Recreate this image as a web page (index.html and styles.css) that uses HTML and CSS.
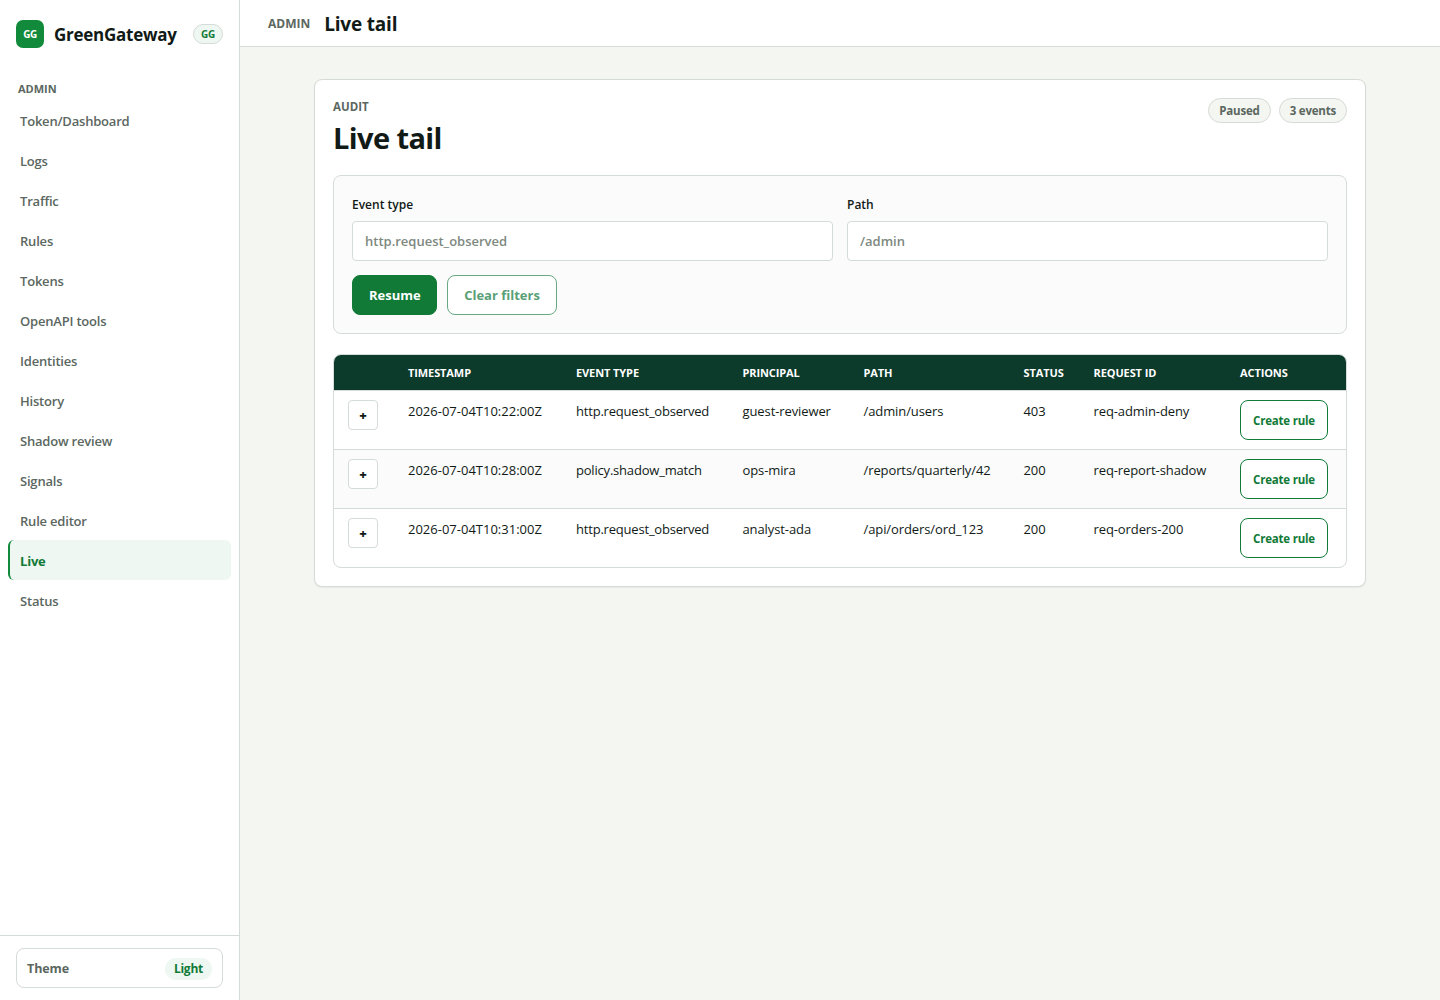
FILE: index.html
```html
<!DOCTYPE html>
<html lang="en">
<head>
<meta charset="utf-8">
<title>GreenGateway – Live tail</title>
<link rel="stylesheet" href="styles.css">
</head>
<body>
<div class="shell">
  <aside class="sidebar">
    <div class="brand">
      <span class="brand-mark">GG</span>
      <span class="brand-name">GreenGateway</span>
      <span class="brand-badge">GG</span>
    </div>
    <div class="nav-heading">ADMIN</div>
    <nav class="nav">
      <a class="nav-link">Token/Dashboard</a>
      <a class="nav-link">Logs</a>
      <a class="nav-link">Traffic</a>
      <a class="nav-link">Rules</a>
      <a class="nav-link">Tokens</a>
      <a class="nav-link">OpenAPI tools</a>
      <a class="nav-link">Identities</a>
      <a class="nav-link">History</a>
      <a class="nav-link">Shadow review</a>
      <a class="nav-link">Signals</a>
      <a class="nav-link">Rule editor</a>
      <a class="nav-link active">Live</a>
      <a class="nav-link">Status</a>
    </nav>
    <div class="sidebar-footer">
      <button class="theme-toggle"><span>Theme</span><span class="theme-value">Light</span></button>
    </div>
  </aside>
  <div class="main">
    <header class="topbar">
      <span class="topbar-section">ADMIN</span>
      <span class="topbar-title">Live tail</span>
    </header>
    <main class="content">
      <section class="card">
        <div class="card-head">
          <div>
            <div class="eyebrow">AUDIT</div>
            <h1 class="title">Live tail</h1>
          </div>
          <div class="pills">
            <span class="pill">Paused</span>
            <span class="pill">3 events</span>
          </div>
        </div>
        <form class="filters">
          <label class="field"><span class="field-label">Event type</span><input class="input" placeholder="http.request_observed"></label>
          <label class="field"><span class="field-label">Path</span><input class="input" placeholder="/admin"></label>
          <div class="actions">
            <button type="button" class="btn btn-primary">Resume</button>
            <button type="button" class="btn btn-muted">Clear filters</button>
          </div>
        </form>
        <div class="table-wrap">
          <table class="table">
            <colgroup>
              <col class="c-expand"><col class="c-time"><col class="c-event"><col class="c-principal"><col class="c-path"><col class="c-status"><col class="c-request"><col class="c-actions">
            </colgroup>
            <thead>
              <tr><th></th><th>TIMESTAMP</th><th>EVENT TYPE</th><th>PRINCIPAL</th><th>PATH</th><th>STATUS</th><th>REQUEST ID</th><th>ACTIONS</th></tr>
            </thead>
            <tbody>
              <tr><td class="control"><button class="expand">+</button></td><td class="time">2026-07-04T10:22:00Z</td><td class="event">http.request_observed</td><td>guest-reviewer</td><td>/admin/users</td><td>403</td><td>req-admin-deny</td><td class="control"><button class="btn-row">Create rule</button></td></tr>
              <tr><td class="control"><button class="expand">+</button></td><td class="time">2026-07-04T10:28:00Z</td><td class="event">policy.shadow_match</td><td>ops-mira</td><td>/reports/quarterly/42</td><td>200</td><td>req-report-shadow</td><td class="control"><button class="btn-row">Create rule</button></td></tr>
              <tr><td class="control"><button class="expand">+</button></td><td class="time">2026-07-04T10:31:00Z</td><td class="event">http.request_observed</td><td>analyst-ada</td><td>/api/orders/ord_123</td><td>200</td><td>req-orders-200</td><td class="control"><button class="btn-row">Create rule</button></td></tr>
            </tbody>
          </table>
        </div>
      </section>
    </main>
  </div>
</div>
</body>
</html>
```
FILE: styles.css
```css
:root {
  --ink: #111a16;
  --muted: #5b675f;
  --line: #d5dbd6;
  --green: #117a37;
  --green-soft: #eef7f1;
  --bg: #f4f6f1;
}
* { box-sizing: border-box; }
body {
  margin: 0;
  background: var(--bg);
  color: var(--ink);
  font-family: "Open Sans", "Noto Sans", sans-serif;
  font-size: 13px;
  line-height: 20px;
}
button, input { font: inherit; color: inherit; margin: 0; }
.shell { display: grid; grid-template-columns: 240px 1fr; height: 1000px; }

.sidebar { display: flex; flex-direction: column; background: #fff; border-right: 1px solid var(--line); }
.brand { display: flex; align-items: center; gap: 10px; height: 68px; padding: 0 16px; }
.brand-mark { display: grid; place-items: center; width: 28px; height: 28px; border-radius: 7px; background: #118a3b; color: #fff; font-size: 10px; font-weight: 700; letter-spacing: -0.4px; }
.brand-name { padding-top: 2px; font-size: 17px; font-weight: 700; line-height: 24px; letter-spacing: -0.25px; }
.brand-badge { display: grid; place-items: center; width: 30px; height: 20px; margin-left: auto; border: 1px solid var(--line); border-radius: 10px; background: var(--green-soft); color: var(--green); font-size: 10px; line-height: 18px; font-weight: 700; letter-spacing: -0.3px; }
.nav-heading { padding: 11px 18px 1px; font-size: 11px; font-weight: 700; color: var(--muted); }
.nav { display: flex; flex-direction: column; padding: 0 8px; }
.nav-link { display: flex; align-items: center; height: 40px; padding: 2px 10px 0; border-left: 2px solid transparent; border-radius: 6px; color: var(--muted); font-weight: 600; letter-spacing: -0.2px; }
.nav-link.active { border-left-color: #118a3b; background: var(--green-soft); color: var(--green); font-weight: 700; }
.sidebar-footer { margin-top: auto; padding: 12px 16px; border-top: 1px solid var(--line); }
.theme-toggle { display: flex; align-items: center; justify-content: space-between; width: 100%; height: 40px; padding: 1px 10px 0; border: 1px solid var(--line); border-radius: 8px; background: #fff; color: var(--muted); font-size: 12.5px; font-weight: 700; letter-spacing: -0.1px; }
.theme-value { padding: 1px 9px; border-radius: 11px; background: var(--green-soft); color: var(--green); font-size: 12px; letter-spacing: -0.25px; }

.topbar { display: flex; align-items: center; gap: 14px; height: 47px; padding: 2px 28px 0; background: #fff; border-bottom: 1px solid var(--line); }
.topbar-section { font-size: 12px; font-weight: 700; color: var(--muted); }
.topbar-title { font-size: 19px; font-weight: 700; letter-spacing: -0.2px; }
.content { padding: 32px 74px; }
.card { padding: 18px; border: 1px solid var(--line); border-radius: 8px; background: #fff; box-shadow: 0 1px 2px rgba(17, 26, 22, .06); }
.card-head { display: flex; justify-content: space-between; height: 77px; }
.eyebrow { height: 18px; line-height: 17px; font-size: 11.5px; font-weight: 700; color: var(--muted); }
.title { margin: 4px 0 0; font-size: 29px; line-height: 36px; font-weight: 700; letter-spacing: -0.6px; }
.pills { display: flex; gap: 8px; }
.pill { height: 25px; padding: 0 10px; border: 1px solid var(--line); border-radius: 13px; background: var(--bg); color: var(--muted); font-size: 11.5px; line-height: 24px; font-weight: 700; letter-spacing: -0.2px; }

.filters { display: grid; grid-template-columns: 1fr 1fr; gap: 14px; padding: 18px; border: 1px solid var(--line); border-radius: 8px; background: #fafbfa; }
.field { display: flex; flex-direction: column; gap: 6px; }
.field-label { padding-top: 1px; font-size: 12px; font-weight: 600; }
.input { width: 100%; height: 40px; padding: 0 12px; border: 1px solid var(--line); border-radius: 4px; background: #fff; font-weight: 600; }
.input::placeholder { color: #7d897f; opacity: 1; }
.actions { grid-column: 1 / -1; display: flex; gap: 10px; }
.btn { height: 40px; padding: 0 16px; border: 1px solid var(--green); border-radius: 8px; font-weight: 700; white-space: nowrap; }
.btn-primary { width: 85px; background: var(--green); color: #fff; }
.btn-muted { width: 110px; background: #fff; border-color: #68a983; color: #5aa077; }

.table-wrap { margin-top: 20px; border: 1px solid var(--line); border-radius: 8px; overflow: hidden; }
.table { width: 100%; table-layout: fixed; border-collapse: separate; border-spacing: 0; }
.c-expand { width: 60px; }
.c-time { width: 168px; }
.c-event { width: 166.5px; }
.c-principal { width: 121px; }
.c-path { width: 160px; }
.c-status { width: 70px; }
.c-request { width: 146.5px; }
.table th { height: 36px; padding: 0 14px; border-bottom: 1px solid var(--line); background: #0c3a2b; color: #fff; text-align: left; font-size: 11px; font-weight: 700; letter-spacing: -0.1px; white-space: nowrap; }
.table td { height: 59px; padding: 10px 14px 9px; border-bottom: 1px solid var(--line); vertical-align: top; white-space: nowrap; letter-spacing: -0.1px; }
.table td.control { padding-top: 9px; }
.table td.time { letter-spacing: 0; }
.table td.event { letter-spacing: -0.2px; }
.table tr:nth-child(even) td { background: #fafbfa; }
.table tbody tr:last-child td { height: 58px; border-bottom: 0; }
.expand { display: block; width: 30px; height: 30px; padding: 0; border: 1px solid var(--line); border-radius: 4px; background: #fff; font-weight: 800; }
.btn-row { display: block; width: 88px; height: 40px; padding: 2px 0 0; border: 1px solid var(--green); border-radius: 8px; background: #fff; color: var(--green); font-size: 11.5px; font-weight: 700; letter-spacing: -0.2px; white-space: nowrap; }
```
